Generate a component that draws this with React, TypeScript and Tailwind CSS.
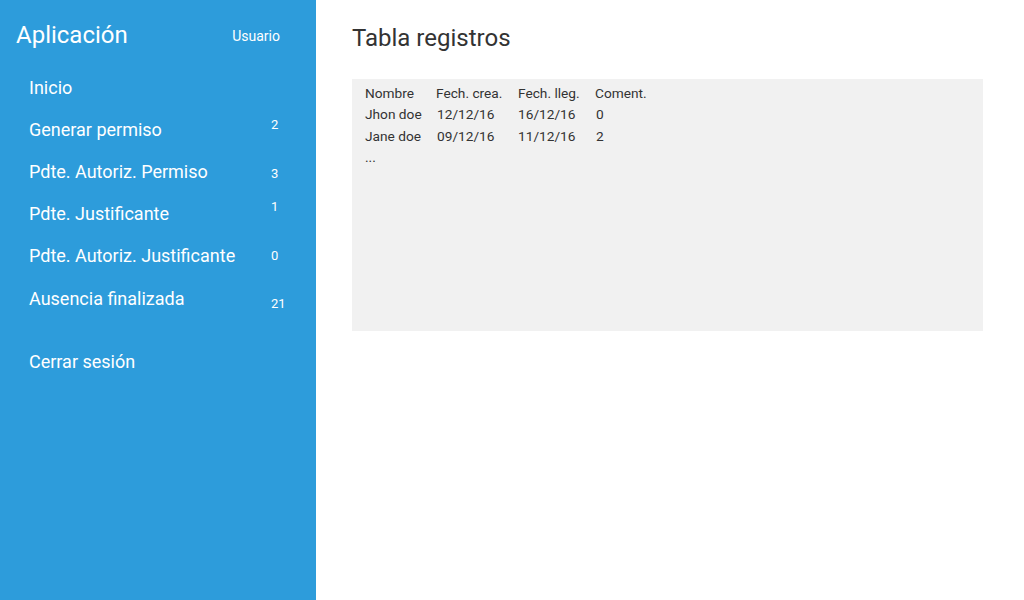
const menu = [
    { label: 'Inicio', count: '', offset: '' },
    { label: 'Generar permiso', count: '2', offset: '-mt-[10px]' },
    { label: 'Pdte. Autoriz. Permiso', count: '3', offset: 'mt-[4px]' },
    { label: 'Pdte. Justificante', count: '1', offset: '-mt-[14px]' },
    { label: 'Pdte. Autoriz. Justificante', count: '0', offset: '' },
    { label: 'Ausencia finalizada', count: '21', offset: 'mt-[12px]' },
];

const rows = [
    ['Nombre', 'Fech. crea.', 'Fech. lleg.', 'Coment.'],
    ['Jhon doe', '12/12/16', '16/12/16', '0'],
    ['Jane doe', '09/12/16', '11/12/16', '2'],
];

export default function App() {
    return (
        <div className="flex w-[1024px] h-[600px] bg-white font-['Roboto',sans-serif]">
            {/* Sidebar */}
            <aside className="w-[316px] h-full bg-[#2d9cdb] text-white flex flex-col">
                <div className="flex items-center justify-between pl-4 pr-9 pt-[18px] h-[52px]">
                    <h1 className="text-[24px] leading-none">Aplicación</h1>
                    <span className="text-[14px] leading-none mt-[2px]">Usuario</span>
                </div>
                <nav className="flex flex-col pl-[29px] pr-[25px] mt-[14px]">
                    {menu.map(item => (
                        <div key={item.label} className="flex items-center justify-between h-[42.2px]">
                            <span className="text-[18px]">{item.label}</span>
                            <span className={`text-[13px] w-[20px] ${item.offset}`}>{item.count}</span>
                        </div>
                    ))}
                    <div className="flex items-center h-[42px] mt-[21px]">
                        <span className="text-[18px]">Cerrar sesión</span>
                    </div>
                </nav>
            </aside>

            {/* Main */}
            <main className="flex-1 pl-9 pr-[41px] pt-[24px]">
                <h2 className="text-[24px] leading-[28px] text-[#333]">Tabla registros</h2>
                <div className="mt-[27px] h-[252px] bg-[#f1f1f1] px-[13px] pt-[3px] text-[13.7px] text-[#333]">
                    {rows.map((r, i) => (
                        <div key={i} className="grid grid-cols-[71px_82px_77px_auto] h-[21.7px] items-center">
                            {r.map((c, j) => (
                                <span key={j} className={i > 0 && (j === 1 || j === 3) ? 'pl-px' : ''}>{c}</span>
                            ))}
                        </div>
                    ))}
                    <div className="h-[21.7px] leading-[21.7px]">...</div>
                </div>
            </main>
        </div>
    );
}
